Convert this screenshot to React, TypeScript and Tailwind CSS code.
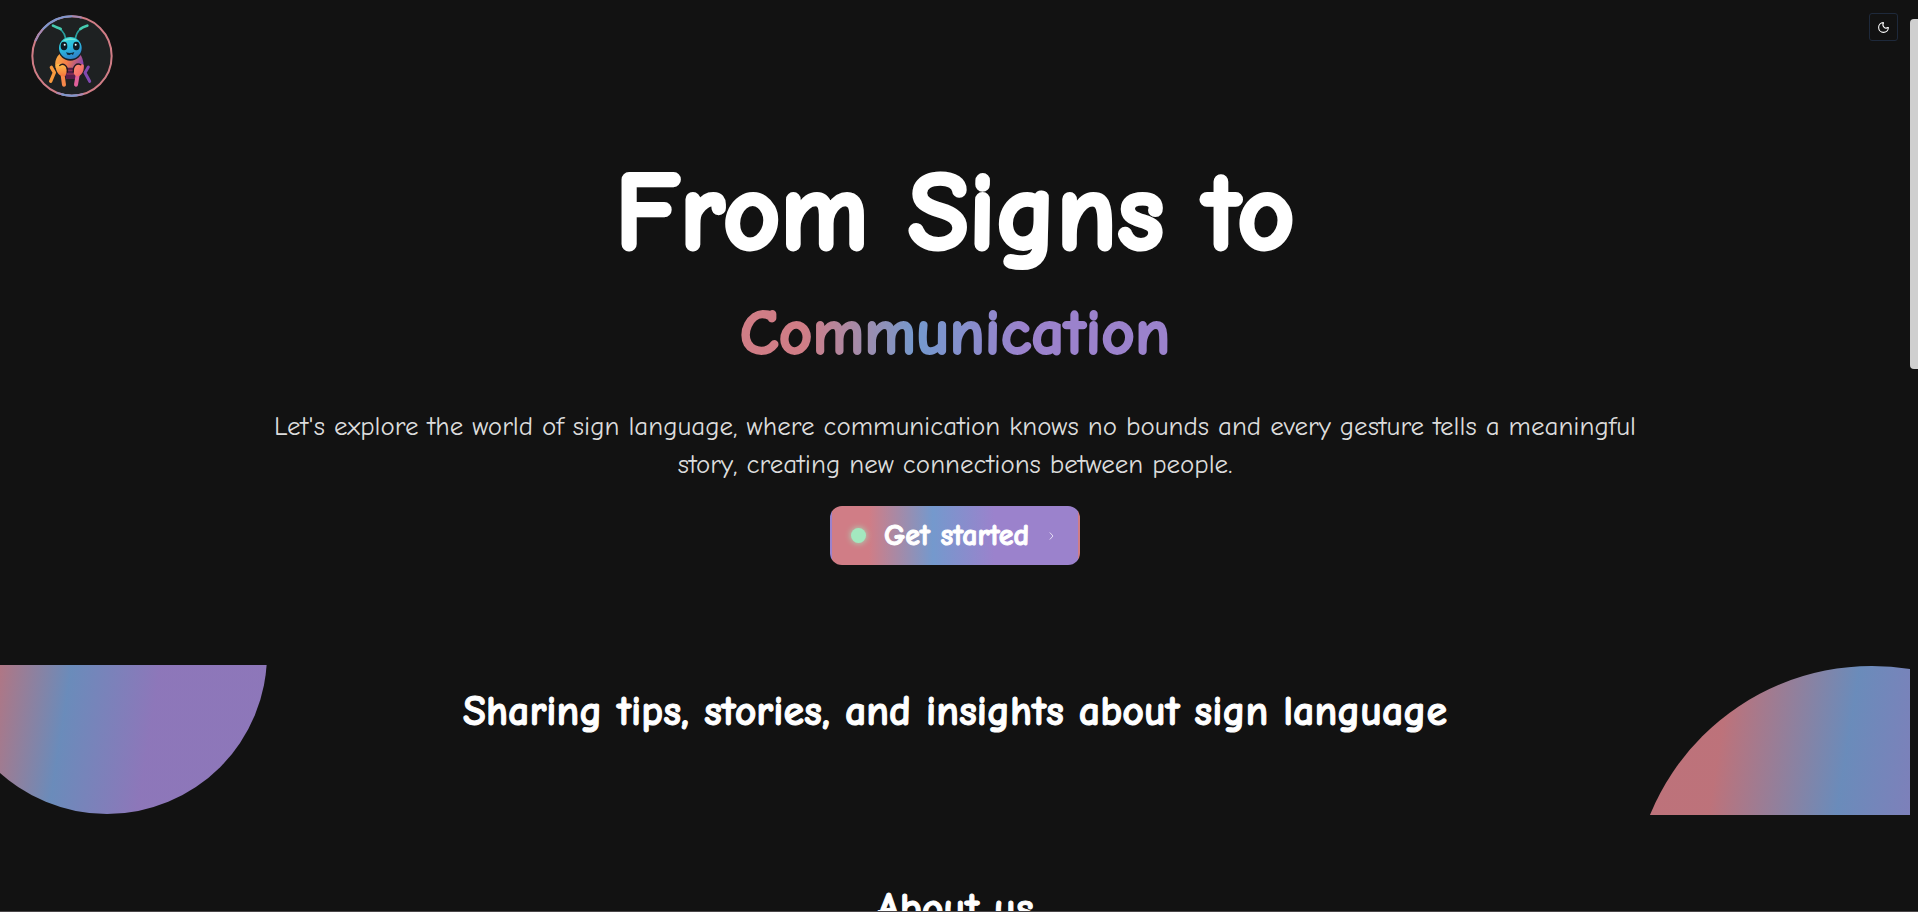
import { Moon } from "lucide-react";

function Mascot() {
  return (
    <svg viewBox="33 32 246 246" className="size-full" role="img" aria-label="Grasshopper mascot">
      <defs>
        <linearGradient id="head" x1="0" y1="0" x2="0.4" y2="1">
          <stop offset="0" stopColor="#3fdcd2" />
          <stop offset="0.5" stopColor="#2bbfe0" />
          <stop offset="1" stopColor="#2f86cc" />
        </linearGradient>
        <linearGradient id="body" x1="0" y1="0" x2="1" y2="0.3">
          <stop offset="0" stopColor="#fdb341" />
          <stop offset="0.5" stopColor="#f27a4a" />
          <stop offset="1" stopColor="#8a45ad" />
        </linearGradient>
        <linearGradient id="legLeft" x1="0" y1="0" x2="0" y2="1">
          <stop offset="0" stopColor="#ffc04a" />
          <stop offset="1" stopColor="#f4753c" />
        </linearGradient>
        <linearGradient id="legRight" x1="0" y1="0" x2="1" y2="1">
          <stop offset="0" stopColor="#ff8f6e" />
          <stop offset="1" stopColor="#f0606a" />
        </linearGradient>
      </defs>
      <circle cx="156" cy="155" r="119" fill="#1e2122" stroke="#d07d86" strokeWidth="6" />
      <g fill="none" strokeWidth="6">
        <path d="M46 110A119 119 0 0 1 68 75M156 36A119 119 0 0 1 185 40" stroke="#a389b4" />
        <path d="M68 75A119 119 0 0 1 156 36" stroke="#7f96cc" />
        <path d="M110 265A119 119 0 0 0 190 269" stroke="#a389b4" />
        <path d="M124 270A119 119 0 0 0 172 273" stroke="#7b96ca" />
      </g>
      <g fill="none" strokeLinecap="round">
        <path d="M137 103C135 91 130 83 124 77" stroke="#2a9d9c" strokeWidth="5" />
        <path d="M122 74C114 70 106 68 99 64" stroke="#46cbb0" strokeWidth="8" />
        <path d="M166 103C168 91 172 83 178 77" stroke="#2a9d9c" strokeWidth="5" />
        <path d="M181 74C188 67 195 66 202 64" stroke="#46cbb0" strokeWidth="8" />
      </g>
      <path d="M120 148C108 158 103 174 107 190L126 214H180L191 186C191 168 185 156 180 148Z" fill="url(#body)" />
      <path d="M134 190H170L168 224H138Z" fill="#551d4b" />
      <path d="M140 198H164M140 209H164" stroke="#8b2e55" strokeWidth="4" />
      <g fill="none" strokeLinecap="round" strokeLinejoin="round">
        <path d="M94 189L103 205L92 231" stroke="#f99a3e" strokeWidth="10" />
        <path d="M205 188L195 205L209 231" stroke="#8149b0" strokeWidth="9" />
        <path d="M127 206L132 241" stroke="#f7884a" strokeWidth="12" />
        <path d="M174 206L168 241" stroke="#e0609a" strokeWidth="12" />
      </g>
      <path
        d="M107 182C118 174 137 178 140 196C141 210 134 217 127 216C116 213 106 200 107 182Z"
        fill="url(#legLeft)"
      />
      <path
        d="M191 182C180 174 162 180 160 198C160 211 167 218 176 215C187 211 193 198 191 182Z"
        fill="url(#legRight)"
      />
      <path
        d="M118 184C130 174 145 184 142 205M184 182C170 174 158 184 160 205"
        fill="none"
        stroke="#24191e"
        strokeWidth="4"
      />
      <ellipse cx="151" cy="134" rx="36" ry="35" fill="#172028" />
      <ellipse cx="151" cy="131" rx="34" ry="33" fill="url(#head)" />
      <path d="M127 112C137 99 162 98 173 110C162 106 140 106 127 112Z" fill="#6fe8d8" />
      <ellipse cx="132" cy="125" rx="10" ry="13" fill="#0f1c24" />
      <ellipse cx="169" cy="125" rx="10" ry="13" fill="#0f1c24" />
      <circle cx="134" cy="121" r="3" fill="#e7ffff" />
      <circle cx="167" cy="121" r="3" fill="#e7ffff" />
      <path d="M138 144C146 147 155 147 163 143L159 152L154 149L149 152L142 151Z" fill="#102a3a" />
    </svg>
  );
}

export default function App() {
  return (
    <div className="flex h-screen overflow-hidden border-b border-[#4a4648] bg-[#121212] font-['Comic_Neue','Comic_Relief',cursive] text-white">
      <div className="flex min-w-0 flex-1 flex-col overflow-hidden">
        <header className="flex items-start justify-between pt-[13px] pr-3 pl-[31px]">
          <a href="#home" className="mt-[2px] size-[82px]">
            <Mascot />
          </a>
          <button
            type="button"
            aria-label="Toggle theme"
            className="flex h-7 w-[29px] items-center justify-center rounded-[3px] border border-[#1e293b]"
          >
            <Moon size={13} strokeWidth={2} />
          </button>
        </header>

        <main>
          <section className="flex flex-col items-center pt-[52px] text-center">
            <h1 className="text-[111px] leading-[128px] font-bold [-webkit-text-stroke:4px_white]">From Signs to</h1>
            <p className="mt-2 bg-[linear-gradient(90deg,#d07d86_15%,#7499cd_41%,#9b82cc_66%)] bg-clip-text text-[65px] leading-[96px] font-bold text-transparent [-webkit-text-stroke:2px_transparent]">
              Communication
            </p>
            <p className="mt-[27px] max-w-[1400px] text-[27px] leading-[38px] text-[#dcdcdc]">
              Let's explore the world of sign language, where communication knows no bounds and every gesture tells a
              meaningful story, creating new connections between people.
            </p>
            <button
              type="button"
              className="mt-[22px] flex h-[59px] w-[250px] items-center rounded-xl border-2 border-transparent bg-[linear-gradient(90deg,#d07d86_15%,#7499cd_41%,#9b82cc_66%)] pr-6 pl-[19px]"
            >
              <span className="size-[15px] rounded-full bg-[#a3e8bf] shadow-[0_0_6px_#a3e8bf]" />
              <span className="ml-[18px] flex-1 text-left text-[30px] leading-9 font-bold whitespace-nowrap [-webkit-text-stroke:1px_white]">
                Get started
              </span>
              <svg viewBox="0 0 5 8" className="h-2 w-[5px]" fill="none" stroke="#e4dcf3" aria-hidden="true">
                <path d="M0.8 0.5L4 4L0.8 7.5" />
              </svg>
            </button>
          </section>

          <section className="relative mt-[100px] flex h-[150px] items-start justify-center overflow-hidden pt-5">
            <div className="absolute bottom-px -left-[53px] size-80 rounded-full bg-[linear-gradient(99deg,#d07d86_18%,#7499cd_41%,#9b82cc_65%)] opacity-90" />
            <div className="absolute top-px -right-[202px] size-[480px] rounded-full bg-[linear-gradient(99deg,#d07d86_18%,#7499cd_41%,#9b82cc_65%)] opacity-90" />
            <h2 className="relative text-[42px] leading-[54px] font-bold [-webkit-text-stroke:1px_white]">
              Sharing tips, stories, and insights about sign language
            </h2>
          </section>

          <section className="pt-[67px] text-center">
            <h2 className="text-[42px] leading-[54px] font-bold [-webkit-text-stroke:1px_white]">About us</h2>
          </section>
        </main>
      </div>

      <div className="w-2 shrink-0 pt-[19px]" aria-hidden="true">
        <div className="h-[350px] rounded-l bg-[#cfcfcf]" />
      </div>
    </div>
  );
}
